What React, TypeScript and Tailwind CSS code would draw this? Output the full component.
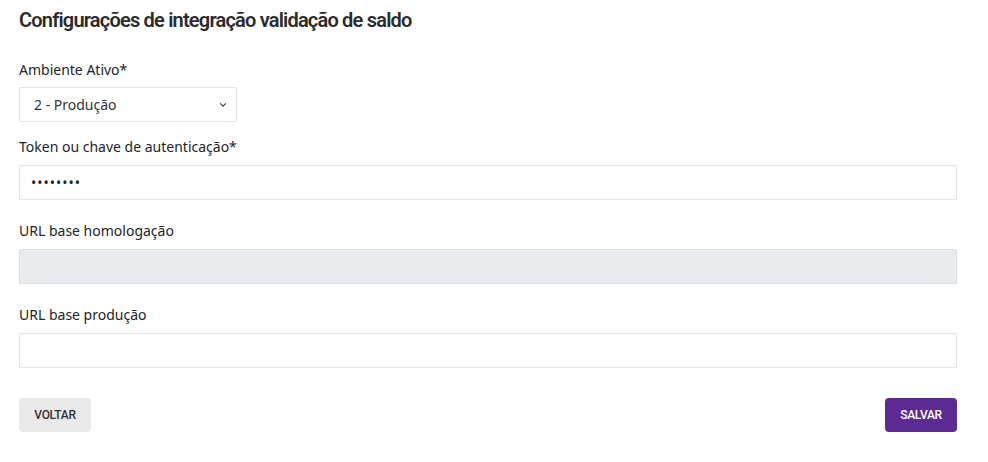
import React, { useState } from "react";

const ConfigIntegracao = () => {
  const [ambiente, setAmbiente] = useState("2");
  const [token, setToken] = useState("12345678");
  const [urlProd, setUrlProd] = useState("");

  return (
    <div className="min-h-screen bg-white pl-[19px] pr-[31px] pt-[5px] font-['Noto_Sans',sans-serif] text-[#212529]">
      <h2 className="text-[20px] font-semibold leading-[30px] tracking-[-0.8px] text-[#2b2b2b] font-['Roboto',sans-serif]">
        Configurações de integração validação de saldo
      </h2>

      <form className="mt-[25px]" onSubmit={(e) => e.preventDefault()}>
        <label className="block text-[14px] leading-[20px] mb-[7px]">Ambiente Ativo*</label>
        <div className="relative w-[218px]">
          <select
            value={ambiente}
            onChange={(e) => setAmbiente(e.target.value)}
            className="w-full h-[35px] appearance-none border border-[#e3e6ea] bg-white pl-[14px] pr-8 text-[14px] text-[#333] outline-none"
          >
            <option value="1">1 - Homologação</option>
            <option value="2">2 - Produção</option>
          </select>
          <svg
            className="pointer-events-none absolute right-[10px] top-[14px] h-[8px] w-[8px] text-[#444]"
            viewBox="0 0 10 10"
            fill="none"
            stroke="currentColor"
            strokeWidth="1.6"
          >
            <path d="M1.5 3l3.5 3.5L8.5 3" />
          </svg>
        </div>

        <label className="block text-[14px] leading-[20px] mt-[15px] mb-[8px]">
          Token ou chave de autenticação*
        </label>
        <input
          type="password"
          value={token}
          onChange={(e) => setToken(e.target.value)}
          className="block w-full h-[35px] border border-[#e3e6ea] bg-white px-[11px] text-[14px] tracking-[1px] outline-none"
        />

        <label className="block text-[14px] leading-[20px] mt-[21px] mb-[8px]">URL base homologação</label>
        <input
          type="text"
          disabled
          className="block w-full h-[35px] border border-[#dde1e5] bg-[#e9ecef] px-[14px] text-[14px] outline-none"
        />

        <label className="block text-[14px] leading-[20px] mt-[21px] mb-[8px]">URL base produção</label>
        <input
          type="text"
          value={urlProd}
          onChange={(e) => setUrlProd(e.target.value)}
          className="block w-full h-[35px] border border-[#e3e6ea] bg-white px-[14px] text-[14px] outline-none"
        />

        <div className="mt-[30px] flex items-center justify-between">
          <button
            type="button"
            className="h-[34px] w-[72px] rounded-[4px] bg-[#e9e9e9] font-['Roboto',sans-serif] text-[12px] font-medium tracking-[-0.3px] text-[#333]"
          >
            VOLTAR
          </button>
          <button
            type="submit"
            className="h-[34px] w-[72px] rounded-[4px] bg-[#5b2a92] font-['Roboto',sans-serif] text-[12px] font-medium tracking-[-0.3px] text-white"
          >
            SALVAR
          </button>
        </div>
      </form>
    </div>
  );
};

export default ConfigIntegracao;
